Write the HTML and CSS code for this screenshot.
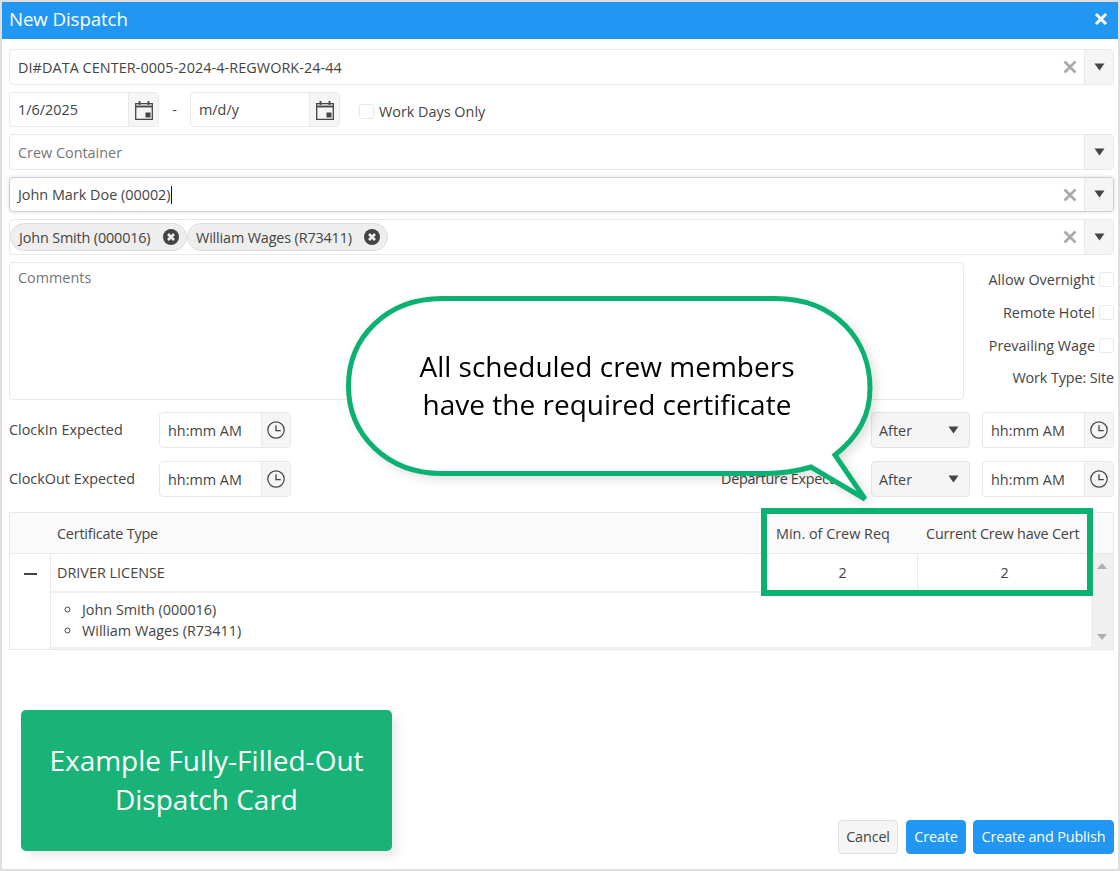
FILE: index.html
```html
<!DOCTYPE html>
<html lang="en">
<head>
<meta charset="utf-8">
<title>New Dispatch</title>
<link rel="stylesheet" href="styles.css">
</head>
<body>
<svg class="defs" width="0" height="0" aria-hidden="true">
  <defs>
    <symbol id="i-cal" viewBox="0 0 18 20"><path d="M.7 3.7h16.6v15.6H.7z" fill="none" stroke="#444" stroke-width="1.3"/><path d="M.7 6.5h16.6" fill="none" stroke="#444" stroke-width="1.8"/><path d="M4.5 1v4M13.5 1v4" stroke="#444" stroke-width="1.8"/><path d="M10.5 12.5h5v5h-5z" fill="#444"/></symbol>
    <symbol id="i-clock" viewBox="0 0 18 18"><circle cx="9" cy="9" r="8.2" fill="none" stroke="#444" stroke-width="1.2"/><path d="M9 4.2V9.6h4.8" fill="none" stroke="#444" stroke-width="1.3"/></symbol>
    <symbol id="i-x" viewBox="0 0 14 14"><path d="M1.5 1.5l11 11M12.5 1.5l-11 11" stroke="#aaa" stroke-width="2.8" fill="none"/></symbol>
    <symbol id="i-caret" viewBox="0 0 10 8"><path d="M0 .5h10L5 7.5z" fill="#444"/></symbol>
    <symbol id="i-xc" viewBox="0 0 16 16"><circle cx="8" cy="8" r="8" fill="#444"/><path d="M5 5l6 6M11 5l-6 6" stroke="#eee" stroke-width="2.6"/></symbol>
  </defs>
</svg>
<div class="window">
  <header class="titlebar">
    <span class="title">New Dispatch</span>
    <svg class="close" viewBox="0 0 14 14"><path d="M2 2l10 10M12 2L2 12" stroke="#fff" stroke-width="3" fill="none"/></svg>
  </header>
  <main class="form">
    <div class="combo">
      <span class="combo-text caps">DI#DATA CENTER-0005-2024-4-REGWORK-24-44</span>
      <svg class="clear"><use href="#i-x"/></svg>
      <span class="addon combo-addon"><svg class="caret"><use href="#i-caret"/></svg></span>
    </div>
    <div class="date-row">
      <div class="group date"><span class="group-text">1/6/2025</span><span class="addon"><svg class="cal"><use href="#i-cal"/></svg></span></div>
      <span class="dash">-</span>
      <div class="group date"><span class="group-text">m/d/y</span><span class="addon"><svg class="cal"><use href="#i-cal"/></svg></span></div>
      <label class="work-days"><input class="check" type="checkbox"><span>Work Days Only</span></label>
    </div>
    <div class="combo">
      <span class="combo-text placeholder">Crew Container</span>
      <span class="addon combo-addon"><svg class="caret"><use href="#i-caret"/></svg></span>
    </div>
    <div class="combo focused">
      <span class="combo-text">John Mark Doe (00002)<i class="cursor"></i></span>
      <svg class="clear"><use href="#i-x"/></svg>
      <span class="addon combo-addon"><svg class="caret"><use href="#i-caret"/></svg></span>
    </div>
    <div class="combo">
      <div class="chips">
        <span class="chip chip-short">John Smith (000016)<svg class="chip-x"><use href="#i-xc"/></svg></span>
        <span class="chip chip-long">William Wages (R73411)<svg class="chip-x"><use href="#i-xc"/></svg></span>
      </div>
      <svg class="clear"><use href="#i-x"/></svg>
      <span class="addon combo-addon"><svg class="caret"><use href="#i-caret"/></svg></span>
    </div>
    <div class="comment-row">
      <div class="comments">Comments</div>
      <div class="options">
        <label class="option"><span>Allow Overnight</span><input class="check" type="checkbox"></label>
        <label class="option"><span>Remote Hotel</span><input class="check" type="checkbox"></label>
        <label class="option"><span>Prevailing Wage</span><input class="check" type="checkbox"></label>
        <div class="option work-type">Work Type: Site</div>
      </div>
    </div>
    <div class="time-row first">
      <span class="time-label">ClockIn Expected</span>
      <div class="group time"><span class="group-text">hh:mm AM</span><span class="addon"><svg class="clock"><use href="#i-clock"/></svg></span></div>
      <div class="select"><span>After</span><svg class="caret"><use href="#i-caret"/></svg></div>
      <div class="group time"><span class="group-text">hh:mm AM</span><span class="addon"><svg class="clock"><use href="#i-clock"/></svg></span></div>
    </div>
    <div class="time-row">
      <span class="time-label">ClockOut Expected</span>
      <div class="group time"><span class="group-text">hh:mm AM</span><span class="addon"><svg class="clock"><use href="#i-clock"/></svg></span></div>
      <span class="time-label departure">Departure Expected</span>
      <div class="select"><span>After</span><svg class="caret"><use href="#i-caret"/></svg></div>
      <div class="group time"><span class="group-text">hh:mm AM</span><span class="addon"><svg class="clock"><use href="#i-clock"/></svg></span></div>
    </div>
    <section class="grid">
      <div class="grid-head">
        <span class="cell-toggle"></span>
        <span class="cell-type head-type">Certificate Type</span>
        <span class="cell-min">Min. of Crew Req</span>
        <span class="cell-cur head-cur">Current Crew have Cert</span>
        <span class="cell-bar"></span>
      </div>
      <div class="grid-body">
        <div class="grid-rows">
          <div class="grid-row">
            <span class="cell-toggle minus"><i class="minus-bar"></i></span>
            <span class="cell-type row-cell">DRIVER LICENSE</span>
            <span class="cell-min num">2</span>
            <span class="cell-cur num">2</span>
          </div>
          <div class="grid-detail">
            <span class="cell-toggle"></span>
            <ul class="crew">
              <li>John Smith (000016)</li>
              <li>William Wages (R73411)</li>
            </ul>
          </div>
        </div>
        <div class="scrollbar"><i class="arrow up"></i><i class="arrow down"></i></div>
      </div>
    </section>
    <footer class="footer">
      <button class="btn cancel" type="button">Cancel</button>
      <button class="btn primary create" type="button">Create</button>
      <button class="btn primary publish" type="button">Create and Publish</button>
    </footer>
  </main>

  <div class="highlight"></div>
  <div class="callout">
    <svg class="bubble" viewBox="0 0 540 220" width="540" height="220">
      <path d="M97 3.5H430C492 3.5 525 47 525 93C525 120 514 141 490 160L520 204L466 172C450 177 435 178.500 420 178.500H97C42 178.500 3.500 140 3.500 91C3.500 42 42 3.500 97 3.500Z" fill="#fff" stroke="#0cb172" stroke-width="5"/>
    </svg>
    <p class="callout-text">All scheduled crew members<br>have the required certificate</p>
  </div>
  <div class="note">Example Fully-Filled-Out<br>Dispatch Card</div>
</div>
</body>
</html>
```

FILE: styles.css
```css
* { box-sizing: border-box; }
html, body { margin: 0; height: 100%; }
body { font-family: "Open Sans", "Noto Sans", sans-serif; font-size: 14.4px; color: #444; background: #fff; }
.defs { position: absolute; }
.window { position: relative; width: 1120px; height: 871px; border: 2px solid #dedede; display: flex; flex-direction: column; background: #fff; overflow: hidden; }
.titlebar { height: 37px; flex: none; background: #2196f3; color: #fff; display: flex; align-items: center; justify-content: space-between; padding: 0 10px 4px 8px; }
.title { font-size: 18.7px; margin-left: -1px; letter-spacing: -.1px; }
.close { width: 14px; height: 14px; margin-top: 1px; }

.form { flex: 1; padding: 10px 4px 15px 7px; display: flex; flex-direction: column; gap: 7px; min-height: 0; }
.combo { height: 36px; flex: none; border: 1px solid #e8e8e8; border-radius: 4px; display: flex; align-items: center; background: #fff; }
.combo.focused { height: 35px; }
.combo-text { flex: 1; padding-left: 8px; white-space: nowrap; }
.caps { letter-spacing: .07px; }
.placeholder { color: #757575; }
.focused { border-color: #cfcfcf; box-shadow: 0 0 4px rgba(0,0,0,.14); }
.cursor { display: inline-block; width: 1px; height: 18px; background: #111; vertical-align: -4px; }
.clear { width: 14px; height: 14px; margin-right: 7px; flex: none; }
.addon { background: #f5f5f5; border-left: 1px solid #e8e8e8; display: flex; align-items: center; justify-content: center; flex: none; align-self: stretch; border-radius: 0 4px 4px 0; }
.combo-addon { width: 29px; padding-bottom: 1px; }
.caret { width: 11px; height: 8px; }

.date-row { display: flex; align-items: center; height: 35px; flex: none; }
.group { display: flex; height: 36px; border: 1px solid #e8e8e8; border-radius: 4px; align-items: center; background: #fff; flex: none; }
.date { height: 35px; width: 150px; }
.group-text { flex: 1; padding-left: 8px; white-space: nowrap; }
.date .addon { width: 30px; }
.cal { width: 18px; height: 20px; }
.dash { width: 31px; text-align: center; }
.work-days { display: flex; align-items: center; gap: 5px; margin: 3px 0 0 19px; }
.check { appearance: none; width: 15px; height: 15px; margin: 0; flex: none; border: 1px solid #e8e8e8; border-radius: 3px; background: #fff; }

.chips { flex: 1; display: flex; }
.chip { height: 28px; border: 1px solid #ddd; border-radius: 14px; background: #eee; display: flex; align-items: center; justify-content: space-between; padding: 0 7px 0 8px; letter-spacing: -.15px; white-space: nowrap; }
.chip-short { width: 177px; }
.chip-long { width: 201px; }
.chip-x { width: 16px; height: 16px; }

.comment-row { display: flex; height: 138px; flex: none; }
.comments { width: 955px; border: 1px solid #e8e8e8; border-radius: 4px; padding: 5px 8px; color: #757575; }
.options { flex: 1; display: flex; flex-direction: column; align-items: flex-end; padding-top: 8px; gap: 14px; }
.option { display: flex; align-items: center; gap: 4px; height: 19px; white-space: nowrap; }
.work-type { margin-top: -1px; letter-spacing: -.12px; }

.time-row { display: flex; align-items: center; height: 36px; flex: none; margin-top: 6px; }
.time-row.first { margin-top: 5px; }
.time-label { width: 150px; flex: none; padding-bottom: 1px; white-space: nowrap; }
.time { width: 132px; }
.time .addon { width: 29px; }
.clock { width: 18px; height: 18px; }
.select { width: 99px; height: 36px; margin: 0 12px 0 auto; border: 1px solid #e4e4e4; border-radius: 4px; background: #f5f5f5; display: flex; align-items: center; justify-content: space-between; padding: 0 10px 0 7px; flex: none; }
.departure { margin-left: auto; letter-spacing: -.3px; }
.departure + .select { margin-left: 0; }

.grid { margin-top: 8px; border: 1px solid #e8e8e8; flex: none; height: 138px; display: flex; flex-direction: column; }
.grid-head { height: 41px; flex: none; display: flex; align-items: center; background: #fafafa; border-bottom: 1px solid #e8e8e8; }
.cell-toggle { width: 41px; flex: none; align-self: stretch; }
.cell-type { flex: 1; padding-left: 6px; }
.head-type { letter-spacing: -.2px; }
.head-cur { letter-spacing: -.18px; }
.row-cell { align-self: stretch; display: flex; align-items: center; border-bottom: 2px solid #f0f0f0; }
.cell-min { width: 150px; flex: none; padding-left: 9px; white-space: nowrap; }
.cell-cur { width: 174px; flex: none; padding-left: 9px; white-space: nowrap; }
.cell-bar { width: 22px; flex: none; }
.grid-body { flex: 1; display: flex; min-height: 0; }
.grid-rows { flex: 1; display: flex; flex-direction: column; min-width: 0; }
.grid-row { height: 39px; flex: none; display: flex; align-items: center; }
.minus { border-right: 1px solid #e8e8e8; display: flex; align-items: center; justify-content: center; }
.minus-bar { width: 13px; height: 2px; background: #444; }
.num { align-self: stretch; display: flex; align-items: center; justify-content: center; padding: 0; border-left: 1px solid #e8e8e8; border-bottom: 2px solid #f0f0f0; }
.grid-detail { flex: 1; display: flex; border-bottom: 2px solid #f0f0f0; }
.grid-detail .cell-toggle { border-right: 1px solid #e8e8e8; margin-bottom: -2px; background: #fff; }
.crew { margin: 5.5px 0 0; padding: 0 0 0 31px; line-height: 21.5px; list-style: circle; }
.scrollbar { width: 22px; flex: none; background: #f0f0f0; display: flex; flex-direction: column; justify-content: space-between; align-items: center; padding: 9px 0; }
.arrow { width: 0; height: 0; border-left: 5px solid transparent; border-right: 5px solid transparent; }
.up { border-bottom: 6px solid #b0b0b0; }
.down { border-top: 6px solid #b0b0b0; }

.footer { margin-top: auto; display: flex; justify-content: flex-end; gap: 8px; }
.btn { font: inherit; height: 34px; border-radius: 4px; padding: 0 0 2px; cursor: pointer; letter-spacing: -.15px; }
.cancel { width: 60px; background: #f5f5f5; border: 1px solid #e0e0e0; color: #444; }
.primary { background: #2196f3; border: 1px solid #2196f3; color: #fff; }
.create { width: 60px; }
.publish { width: 141px; margin-left: -1px; }

.highlight { position: absolute; left: 759px; top: 506px; width: 332px; height: 88px; border: 6px solid #0cb172; }
.callout { position: absolute; left: 343px; top: 293px; width: 540px; height: 220px; filter: drop-shadow(4px 4px 5px rgba(0,0,0,.12)); }
.bubble { display: block; }
.callout-text { position: absolute; left: 0; top: 52px; width: 524px; margin: 0; text-align: center; font-size: 28px; line-height: 38px; color: #000; }
.note { position: absolute; left: 19px; top: 708px; width: 371px; height: 141px; padding-bottom: 2px; background: #19b377; border-radius: 5px; color: #fff; display: flex; align-items: center; justify-content: center; text-align: center; font-size: 28px; line-height: 39px; box-shadow: 6px 6px 10px rgba(0,0,0,.08); }
```
